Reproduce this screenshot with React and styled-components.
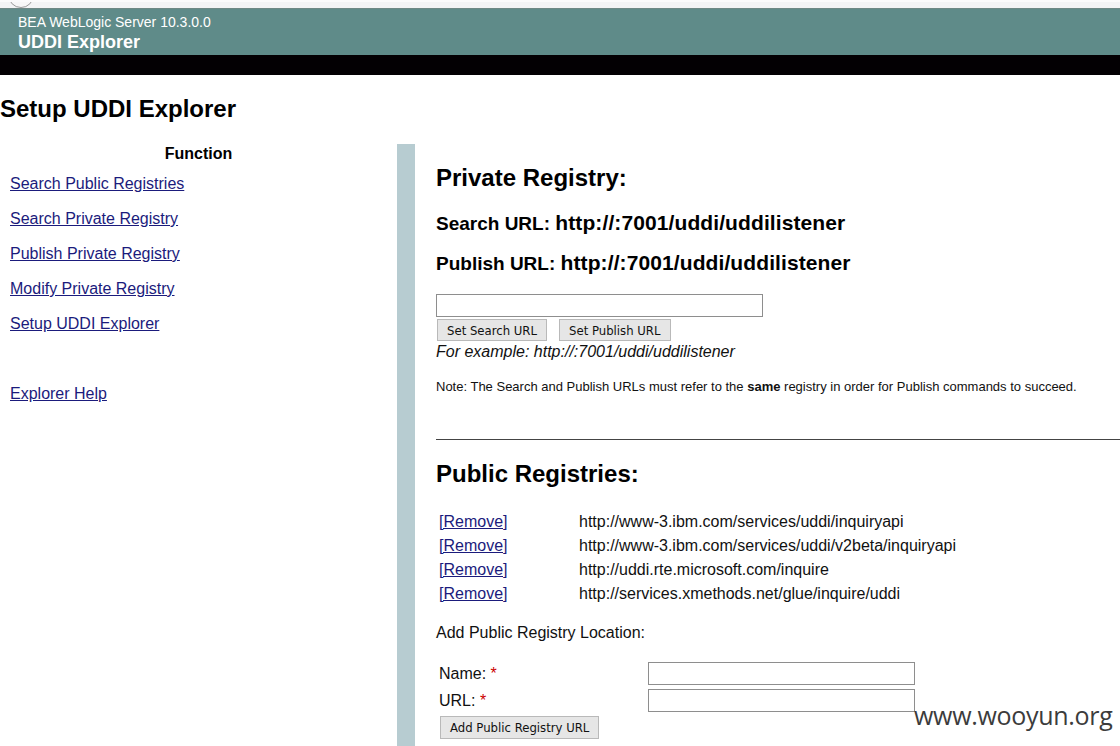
import React from 'react';
import styled, { createGlobalStyle } from 'styled-components';

const GlobalStyle = createGlobalStyle`
  html, body {
    margin: 0;
    padding: 0;
    background: #ffffff;
    font-family: "Liberation Sans", Arial, sans-serif;
    color: #000;
  }
`;

const functions = [
  'Search Public Registries',
  'Search Private Registry',
  'Publish Private Registry',
  'Modify Private Registry',
  'Setup UDDI Explorer',
];

const registries = [
  'http://www-3.ibm.com/services/uddi/inquiryapi',
  'http://www-3.ibm.com/services/uddi/v2beta/inquiryapi',
  'http://uddi.rte.microsoft.com/inquire',
  'http://services.xmethods.net/glue/inquire/uddi',
];

const App = () => {
  return (
    <Page>
      <GlobalStyle />
      <BrowserStrip>
        <BrowserCircle />
      </BrowserStrip>
      <Header>
        <Product>BEA WebLogic Server 10.3.0.0</Product>
        <AppName>UDDI Explorer</AppName>
      </Header>
      <BlackBar />
      <PageTitle>Setup UDDI Explorer</PageTitle>

      <Main>
        <Sidebar>
          <SidebarTitle>Function</SidebarTitle>
          {functions.map((f) => (
            <NavLink key={f} href="#">{f}</NavLink>
          ))}
          <NavLink href="#" $gap>Explorer Help</NavLink>
        </Sidebar>

        <Divider />

        <Content>
          <SectionTitle>Private Registry:</SectionTitle>
          <UrlLine>
            Search URL: <UrlValue>http://:7001/uddi/uddilistener</UrlValue>
          </UrlLine>
          <UrlLine $second>
            Publish URL: <UrlValue>http://:7001/uddi/uddilistener</UrlValue>
          </UrlLine>

          <UrlInput type="text" />
          <ButtonRow>
            <Button>Set Search URL</Button>
            <Button>Set Publish URL</Button>
          </ButtonRow>
          <Example>For example: http://:7001/uddi/uddilistener</Example>
          <Note>
            Note: The Search and Publish URLs must refer to the <b>same</b> registry in order for Publish commands to succeed.
          </Note>

          <Rule />

          <SectionTitle>Public Registries:</SectionTitle>
          <RegistryTable>
            {registries.map((r) => (
              <RegistryRow key={r}>
                <RemoveLink href="#">[Remove]</RemoveLink>
                <span>{r}</span>
              </RegistryRow>
            ))}
          </RegistryTable>

          <AddLabel>Add Public Registry Location:</AddLabel>
          <FormGrid>
            <FieldLabel>Name: <Req>*</Req></FieldLabel>
            <FieldInput type="text" />
            <FieldLabel>URL: <Req>*</Req></FieldLabel>
            <FieldInput type="text" />
          </FormGrid>
          <Button $add>Add Public Registry URL</Button>
        </Content>
      </Main>

      <Watermark>www.wooyun.org</Watermark>
    </Page>
  );
};

export default App;

const Page = styled.div`
  position: relative;
  width: 1120px;
  height: 746px;
  overflow: hidden;
  background: #fff;
`;

const BrowserStrip = styled.div`
  height: 8px;
  background: #f3f4f5;
  border-top: 2px solid #fbfbfb;
  box-sizing: border-box;
  overflow: hidden;
  padding-left: 8px;
`;

const BrowserCircle = styled.div`
  width: 24px;
  height: 24px;
  margin-top: -20px;
  border-radius: 50%;
  border: 1px solid #9a9a9a;
  background: #f7f7f7;
`;

const Header = styled.div`
  height: 47px;
  background: #5f8b89;
  border-top: 1px solid #6e8884;
  box-sizing: border-box;
  padding: 5px 0 0 18px;
  color: #fff;
`;

const Product = styled.div`
  font-size: 14px;
  line-height: 17px;
`;

const AppName = styled.div`
  font-size: 18px;
  font-weight: bold;
  line-height: 22px;
`;

const BlackBar = styled.div`
  height: 20px;
  background: #030003;
`;

const PageTitle = styled.h1`
  margin: 20px 0 0 0;
  font-size: 24px;
  line-height: 28px;
  font-weight: bold;
`;

const Main = styled.div`
  display: flex;
  margin-top: 21px;
  height: 620px;
`;

const Sidebar = styled.div`
  width: 397px;
  display: flex;
  flex-direction: column;
  align-items: flex-start;
  padding-top: 1px;
`;

const SidebarTitle = styled.div`
  align-self: stretch;
  text-align: center;
  font-size: 16px;
  font-weight: bold;
  line-height: 18px;
  margin-bottom: 12px;
`;

const NavLink = styled.a`
  margin-left: 10px;
  font-size: 16px;
  line-height: 18px;
  color: #1b1b7c;
  text-decoration: underline;
  margin-top: ${({ $gap }) => ($gap ? '35px' : '0')};
  margin-bottom: 17px;
`;

const Divider = styled.div`
  width: 18px;
  background: #b7ccd1;
  flex-shrink: 0;
`;

const Content = styled.div`
  flex: 1;
  padding-left: 21px;
  display: flex;
  flex-direction: column;
  align-items: flex-start;
`;

const SectionTitle = styled.h2`
  margin: 20px 0 0;
  font-size: 24px;
  line-height: 28px;
  font-weight: bold;
`;

const UrlLine = styled.h3`
  margin: ${({ $second }) => ($second ? '15px 0 0' : '19px 0 0')};
  font-size: 19px;
  line-height: 24px;
  font-weight: bold;
`;

const UrlValue = styled.span`
  font-size: 21px;
  font-weight: 900;
  letter-spacing: 0.1px;
`;

const UrlInput = styled.input`
  margin-top: 18px;
  width: 327px;
  height: 23px;
  box-sizing: border-box;
  border: 1px solid #8e8e8e;
  background: #fff;
`;

const ButtonRow = styled.div`
  display: flex;
  gap: 12px;
  margin-top: 2px;
  margin-left: 1px;
`;

const Button = styled.button`
  padding: 0 9px;
  font-family: "DejaVu Sans Condensed", "Liberation Sans Narrow", "Liberation Sans", sans-serif;
  font-size: 13px;
  color: #111;
  background: #e6e6e6;
  border: 1px solid #b9b9b9;
  border-radius: 0;
  margin-top: ${({ $add }) => ($add ? '4px' : '0')};
  margin-left: ${({ $add }) => ($add ? '4px' : '0')};
  height: ${({ $add }) => ($add ? '23px' : '22px')};
`;

const Example = styled.div`
  font-size: 16px;
  font-style: italic;
  line-height: 20px;
  margin-top: 1px;
  color: #111;
`;

const Note = styled.div`
  font-size: 13px;
  line-height: 16px;
  margin-top: 17px;
  color: #111;
`;

const Rule = styled.div`
  align-self: stretch;
  height: 1px;
  background: #444;
  margin-top: 44px;
  margin-right: -20px;
`;

const RegistryTable = styled.div`
  margin-top: 22px;
  margin-left: 3px;
  display: flex;
  flex-direction: column;
`;

const RegistryRow = styled.div`
  display: grid;
  grid-template-columns: 140px auto;
  font-size: 16px;
  line-height: 24px;
  color: #111;
`;

const RemoveLink = styled.a`
  color: #1b1b7c;
  text-decoration: underline;
`;

const AddLabel = styled.div`
  font-size: 16px;
  line-height: 20px;
  margin-top: 17px;
  color: #111;
`;

const FormGrid = styled.div`
  display: grid;
  grid-template-columns: 209px 267px;
  row-gap: 4px;
  align-items: center;
  margin-top: 19px;
  margin-left: 3px;
`;

const FieldLabel = styled.div`
  font-size: 16px;
  line-height: 20px;
  color: #111;
`;

const Req = styled.span`
  color: #c00;
`;

const FieldInput = styled.input`
  width: 267px;
  height: 23px;
  box-sizing: border-box;
  border: 1px solid #8e8e8e;
  background: #fff;
`;

const Watermark = styled.div`
  position: absolute;
  left: 914px;
  top: 698px;
  font-family: "Open Sans", "Liberation Sans", sans-serif;
  font-size: 25px;
  color: #3c3c3c;
  letter-spacing: -0.3px;
`;
